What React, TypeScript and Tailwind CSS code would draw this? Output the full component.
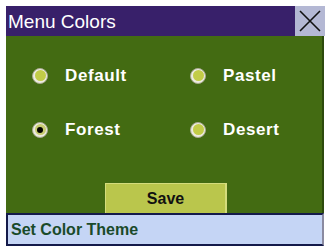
import React, { useState } from 'react';

type Theme = 'Default' | 'Pastel' | 'Forest' | 'Desert';

const Radio: React.FC<{ checked: boolean }> = ({ checked }) => (
    <span className="w-[16px] h-[16px] rounded-full bg-[#ecece0] border border-[#a8a890] flex items-center justify-center shrink-0">
        <span className={`w-[11px] h-[11px] rounded-full flex items-center justify-center ${checked ? 'bg-[#c8cc70]' : 'bg-[#c2cc48]'}`}>
            {checked && <span className="w-[6px] h-[6px] rounded-full bg-black" />}
        </span>
    </span>
);

export default function App() {
    const [theme, setTheme] = useState<Theme>('Forest');
    const options: Theme[] = ['Default', 'Pastel', 'Forest', 'Desert'];

    return (
        <div className="w-[329px] h-[249px] bg-white pt-[6px] px-[6px] font-['Liberation_Sans',Arial,sans-serif]">
            {/* Title bar */}
            <div className="flex h-[30px] w-[319px]">
                <div className="flex-1 bg-[#38206a] text-white text-[19px] leading-none flex items-center pl-[2px]">Menu Colors</div>
                <button className="w-[30px] bg-[#b4b8d4] flex items-center justify-center">
                    <svg width="24" height="24" viewBox="0 0 24 24"><path d="M2 2 L22 22 M22 2 L2 22" stroke="#111" strokeWidth="1.6" /></svg>
                </button>
            </div>

            {/* Body */}
            <div className="h-[177px] w-[318px] bg-[#436b12] border-r-2 border-[#2c4a0c] flex flex-col">
                <div className="grid grid-cols-[158px_1fr] gap-y-[37px] pt-[31px] pl-[26px]">
                    {options.map((o) => (
                        <button key={o} onClick={() => setTheme(o)} className="flex items-center gap-[17px]">
                            <Radio checked={theme === o} />
                            <span className="text-white font-bold text-[17px] leading-none tracking-[0.6px]">{o}</span>
                        </button>
                    ))}
                </div>
                <div className="flex justify-center mt-auto pl-[4px]">
                    <button className="w-[122px] h-[30px] bg-[#bac64c] border-t border-l border-[#d4dc7c] border-r-2 border-[#8c9a2c] text-[#111] font-bold text-[16px]">Save</button>
                </div>
            </div>

            {/* Status bar */}
            <div className="h-[33px] w-[318px] bg-[#c5d5f5] border-2 border-[#141a4a] border-r-[#8a8aa0] flex items-center pl-[3px] text-[#1a4a2a] font-bold text-[16px]">
                Set Color Theme
            </div>
        </div>
    );
}
